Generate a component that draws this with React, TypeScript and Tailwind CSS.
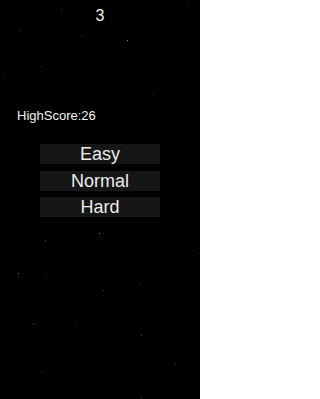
// Difficulty select screen over a dim starfield
const stars: { x: number; y: number; o: number }[] = [
    { x: 61, y: 10, o: 0.25 },
    { x: 20, y: 30, o: 0.2 },
    { x: 82, y: 35, o: 0.25 },
    { x: 127, y: 40, o: 0.55 },
    { x: 42, y: 66, o: 0.2 },
    { x: 3, y: 77, o: 0.2 },
    { x: 153, y: 93, o: 0.25 },
    { x: 188, y: 2, o: 0.2 },
    { x: 99, y: 233, o: 0.5 },
    { x: 45, y: 240, o: 0.25 },
    { x: 197, y: 253, o: 0.2 },
    { x: 18, y: 273, o: 0.45 },
    { x: 46, y: 277, o: 0.3 },
    { x: 140, y: 284, o: 0.25 },
    { x: 103, y: 290, o: 0.3 },
    { x: 33, y: 324, o: 0.4 },
    { x: 75, y: 325, o: 0.25 },
    { x: 141, y: 335, o: 0.25 },
    { x: 175, y: 364, o: 0.25 },
    { x: 42, y: 372, o: 0.25 },
    { x: 141, y: 397, o: 0.25 },
];

const levels = ["Easy", "Normal", "Hard"];

export default function App() {
    return (
        <div
            className="relative w-[200px] h-[399px] bg-black overflow-hidden flex flex-col"
            style={{ fontFamily: '"Liberation Sans", Arial, sans-serif' }}
        >
            {/* Starfield */}
            {stars.map((s, i) => (
                <span
                    key={i}
                    className="absolute w-[1px] h-[1px] bg-white"
                    style={{ left: s.x, top: s.y, opacity: s.o }}
                />
            ))}

            {/* Countdown */}
            <div className="relative pt-[8px] text-center text-[16px] leading-none text-[#f2f2f2]">
                3
            </div>

            {/* High score */}
            <div className="relative mt-[85px] pl-[17px] text-[13px] leading-none text-[#f2f2f2]">
                HighScore:26
            </div>

            {/* Difficulty buttons */}
            <div className="relative mt-[22px] flex flex-col items-center gap-[6.5px]">
                {levels.map((level) => (
                    <button
                        key={level}
                        className="w-[120px] h-[20px] bg-[#161616] text-[18px] leading-[20px] text-[#ececec] text-center"
                    >
                        {level}
                    </button>
                ))}
            </div>
        </div>
    );
}
